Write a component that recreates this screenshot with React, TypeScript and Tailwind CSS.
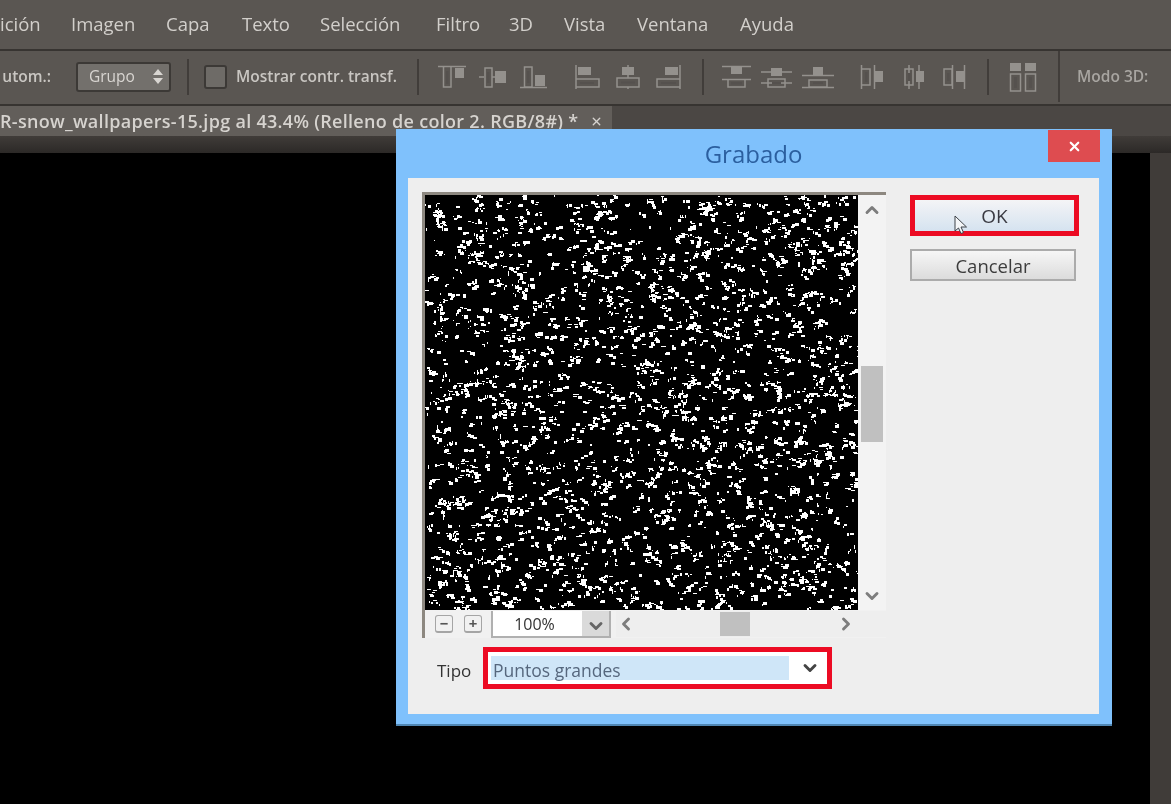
import { ChevronDown, ChevronLeft, ChevronRight, ChevronUp, X } from 'lucide-react';

const menuItems = [
  { label: 'ición', width: 'w-[41px]' },
  { label: 'Imagen', width: 'w-[65px]' },
  { label: 'Capa', width: 'w-[46px]' },
  { label: 'Texto', width: 'w-[48px]' },
  { label: 'Selección', width: 'w-[86px]' },
  { label: 'Filtro', width: 'w-[43px]' },
  { label: '3D', width: 'w-[25px]' },
  { label: 'Vista', width: 'w-[43px]' },
  { label: 'Ventana', width: 'w-[73px]' },
  { label: 'Ayuda', width: 'w-[58px]' },
];

// outline = hollow shapes and guide lines, solid = filled blocks
const alignIcons = [
  { w: 28, outline: 'M0 1.5H28M5.5 2V22H13V2', solid: 'M17 3H26V13H17Z', core: 'M8 6H10.500V19H8Z' },
  { w: 28, outline: 'M0 12H5M13 12H16M6 3H13V22H6Z', solid: 'M16 6H27V18H16Z', core: 'M8 7H10.500V18H8Z' },
  { w: 27, outline: 'M0 22.500H27M4.500 2H12V22H4.500Z', solid: 'M15 10H25V21H15Z', core: 'M7 6H9.500V18H7Z' },
  { w: 25, outline: 'M1 0V24M1 14H24V22H1', solid: 'M3 2H16V10H3Z', core: 'M5 17H19V19H5Z' },
  { w: 24, outline: 'M12 0V2M12 10V13M12 22V24M1 13H23V22H1Z', solid: 'M6 2H18V10H6Z', core: 'M5 16.500H19V18.500H5Z' },
  { w: 25, outline: 'M24 0V24M24 14H1V22H24', solid: 'M9 2H22V10H9Z', core: 'M5 17H20V19H5Z' },
  { w: 29, outline: 'M0 1.500H29M0 14.500H29M6 15V22H23V15', solid: 'M9 2H20V9H9Z', core: 'M9 17H20V19.500H9Z' },
  { w: 31, outline: 'M0 7H31M0 18H31M7 14H24V22H7Z', solid: 'M10 3H21V11H10Z', core: 'M11 17H20V19H11Z' },
  { w: 32, outline: 'M0 10.500H32M0 22.500H32M7 15H25V22H7Z', solid: 'M11 2H21V10H11Z', core: 'M11 17H21V19H11Z' },
  { w: 25, outline: 'M1.500 0V24M14.500 0V24M2 4H10V20H2', solid: 'M15 6H23V17H15Z', core: 'M5 7H7.500V17H5Z' },
  { w: 23, outline: 'M7 0V24M17 0V24M3 4H11V20H3Z', solid: 'M14 6H22V17H14Z', core: 'M6 8H8.500V16H6Z' },
  { w: 24, outline: 'M10.500 0V24M22.500 0V24M2 4H10V20H2Z', solid: 'M14 6H22V17H14Z', core: 'M5 8H7.500V16H5Z' },
];

function AlignIcon({ icon }: { icon: (typeof alignIcons)[number] }) {
  return (
    <svg width={icon.w} height={24} viewBox={`0 0 ${icon.w} 24`} className="shrink-0">
      <path d={icon.outline} fill="none" stroke="#94918d" strokeWidth="1.500" />
      <path d={icon.solid} fill="#94918d" />
      <path d={icon.core} fill="#55514e" />
    </svg>
  );
}

function AlignGroup({ items, gap }: { items: (typeof alignIcons); gap: string }) {
  return (
    <div className={`flex items-center ${gap}`}>
      {items.map((icon) => (
        <AlignIcon key={icon.outline} icon={icon} />
      ))}
    </div>
  );
}

function Separator({ ml }: { ml: string }) {
  return <div className={`h-[36px] w-[2px] shrink-0 bg-[#413d3a] ${ml}`} />;
}

// seeded so the speckle is the same on every load
function buildSpeckle() {
  let seed = 48271;
  const rnd = () => {
    seed = (seed * 16807) % 2147483647;
    return seed / 2147483647;
  };
  let d = '';
  for (let i = 0; i < 2000; i++) {
    const cx = Math.floor(rnd() * 433);
    const cy = Math.floor(rnd() * 415);
    const parts = 1 + Math.floor(rnd() * 5);
    let x = cx;
    let y = cy;
    for (let p = 0; p < parts; p++) {
      const w = 1 + Math.floor(rnd() * 4);
      const h = 1 + Math.floor(rnd() * 3);
      if (x >= 0 && y >= 0 && x + w <= 433 && y + h <= 415) {
        d += `M${x} ${y}h${w}v${h}h-${w}z`;
      }
      x += Math.floor(rnd() * 5) - 1;
      y += Math.floor(rnd() * 5) - 2;
    }
  }
  return d;
}

const speckle = buildSpeckle();

function ZoomButton({ label }: { label: string }) {
  return (
    <div className="flex h-[18px] w-[18px] items-center justify-center rounded-[3px] border border-b-2 border-[#a5a5a5] bg-[#f1f1f1] pb-[1px] text-[15px] leading-none font-bold text-[#555555]">
      {label}
    </div>
  );
}

function Cursor() {
  return (
    <svg width="14" height="20" viewBox="0 0 14 20" className="absolute top-[15px] left-[39px]">
      <path d="M1 1V16L4.500 13L7 18.500L9.500 17.500L7 12H12.500Z" fill="#f4f6f8" stroke="#3d4248" strokeWidth="1" />
    </svg>
  );
}

function Dialog() {
  return (
    <div className="absolute top-[129px] left-[396px] flex h-[597px] w-[716px] flex-col border-b-2 border-b-[#4f86b3] bg-[#7fc1fc] pr-[13px] pb-[10px] pl-[12px]">
      <div className="relative flex h-[49px] shrink-0 items-center justify-center">
        <span className="text-[24px] leading-none text-[#2b5f9f]">Grabado</span>
        <div className="absolute top-[1px] right-[-1px] flex h-[32px] w-[52px] items-center justify-center bg-[#de4c50] text-white">
          <X size={15} strokeWidth={3.5} />
        </div>
      </div>
      <div className="flex flex-1 bg-[#eeeeee] pt-[14px] pl-[14px]">
        <div className="w-[464px] shrink-0">
          <div className="flex h-[446px] flex-col border-t-[3px] border-l-[3px] border-t-[#8d8880] border-l-[#8d8880] bg-[#f1f1f1]">
            <div className="flex h-[415px]">
              <svg width="433" height="415" viewBox="0 0 433 415" shapeRendering="crispEdges" className="shrink-0 bg-black">
                <path d={speckle} fill="#ffffff" />
              </svg>
              <div className="flex flex-1 flex-col items-center bg-[#f3f3f3] pt-[5px] pb-[4px] text-[#7d7d7d]">
                <ChevronUp size={20} strokeWidth={3.5} />
                <div className="mt-[146px] h-[76px] w-[22px] bg-[#c0c0c0]" />
                <ChevronDown size={20} strokeWidth={3.5} className="mt-auto" />
              </div>
            </div>
            <div className="flex flex-1 items-center">
              <div className="flex items-center gap-[11px] pl-[10px]">
                <ZoomButton label="−" />
                <ZoomButton label="+" />
              </div>
              <div className="ml-[9px] flex h-[27px] w-[120px] border-r-[2px] border-b-[2px] border-l-[2px] border-[#b0b0b0] bg-white">
                <span className="flex-1 pr-[6px] text-center text-[16px] leading-[26px] text-[#333333]">100%</span>
                <div className="flex w-[27px] items-end justify-center bg-[#dadada] text-[#666666]">
                  <ChevronDown size={20} strokeWidth={3.5} />
                </div>
              </div>
              <div className="ml-[5px] flex h-[26px] flex-1 items-center bg-[#eeeeee] text-[#7d7d7d]">
                <ChevronLeft size={20} strokeWidth={3.5} />
                <div className="ml-[84px] h-[24px] w-[30px] bg-[#c0c0c0]" />
                <ChevronRight size={20} strokeWidth={3.5} className="mr-[30px] ml-auto" />
              </div>
            </div>
          </div>
          <div className="mt-[9px] flex items-center">
            <span className="ml-[15px] w-[46px] pt-[4px] text-[17px] leading-none text-[#333333]">Tipo</span>
            <div className="flex h-[42px] w-[349px] items-center border-[5px] border-[#ec0b23] bg-white pl-[3px]">
              <div className="flex h-[24px] w-[298px] items-center bg-[#cfe6f8] pt-[5px] pl-[2px] text-[17.500px] leading-none text-[#56677d]">
                Puntos grandes
              </div>
              <ChevronDown size={20} strokeWidth={3.5} className="ml-[11px] text-[#444444]" />
            </div>
          </div>
        </div>
        <div className="ml-[24px] flex w-[169px] flex-col">
          <div className="relative mt-[3px] h-[41px] border-[5px] border-[#ec0b23] bg-gradient-to-b from-[#f4f4f6] to-[#d5e3f0] pt-[1px] text-center text-[19px] leading-[31px] text-[#3a3a42]">
            OK
            <Cursor />
          </div>
          <div className="mt-[13px] h-[32px] w-[166px] border-2 border-[#ababab] bg-gradient-to-b from-[#f6f6f6] to-[#dcdcdc] text-center text-[18.500px] leading-[29px] text-[#3c3c3c]">
            Cancelar
          </div>
        </div>
      </div>
    </div>
  );
}

export default function App() {
  return (
    <div className="relative flex h-[804px] w-[1171px] flex-col overflow-hidden bg-black font-['Open_Sans',sans-serif] blur-[0.5px]">
      <div className="flex h-[49px] shrink-0 items-center gap-[30px] whitespace-nowrap bg-[#5a5652] text-[18.500px] leading-none text-[#d2cfcb]">
        {menuItems.map((item) => (
          <span key={item.label} className={item.width}>
            {item.label}
          </span>
        ))}
      </div>

      <div className="flex h-[57px] shrink-0 items-center whitespace-nowrap border-t-[2px] border-b-[2px] border-t-[#373431] border-b-[#373431] bg-[#5a5652] pb-[2px] text-[#c9c6c2]">
        <span className="w-[51px] text-right text-[15.500px] font-semibold">utom.:</span>
        <div className="ml-[25px] flex h-[30px] w-[95px] items-center rounded-[3px] border-2 border-[#3c3936] bg-[#73706c] pr-[6px] pl-[11px] text-[15.500px] text-[#d8d5d1]">
          Grupo
          <svg width="10" height="15" viewBox="0 0 10 15" className="ml-auto">
            <path d="M5 0L10 6H0ZM5 15L0 9H10Z" fill="#d8d5d1" />
          </svg>
        </div>
        <Separator ml="ml-[16px]" />
        <div className="ml-[15px] h-[24px] w-[23px] rounded-[3px] border-2 border-[#3c3936] bg-[#6e6b67]" />
        <span className="ml-[9px] w-[161px] text-[15.500px] font-semibold">Mostrar contr. transf.</span>
        <Separator ml="ml-[20px]" />
        <div className="ml-[19px]">
          <AlignGroup items={alignIcons.slice(0, 3)} gap="gap-[13px]" />
        </div>
        <div className="ml-[28px]">
          <AlignGroup items={alignIcons.slice(3, 6)} gap="gap-[16px]" />
        </div>
        <Separator ml="ml-[21px]" />
        <div className="ml-[18px]">
          <AlignGroup items={alignIcons.slice(6, 9)} gap="gap-[10px]" />
        </div>
        <div className="ml-[26px]">
          <AlignGroup items={alignIcons.slice(9, 12)} gap="gap-[17px]" />
        </div>
        <Separator ml="ml-[21px]" />
        <svg width="28" height="30" viewBox="0 0 28 30" className="ml-[20px] shrink-0">
          <path d="M1 1H12V9H1ZM16 1H27V9H16Z" fill="#94918d" />
          <path d="M1.500 12H11.500V29H1.500ZM16.500 12H26.500V29H16.500Z" fill="none" stroke="#94918d" strokeWidth="1.500" />
          <path d="M5 15H8V26H5ZM20 15H23V26H20Z" fill="#55514e" />
        </svg>
        <div className="ml-[21px] h-full w-[2px] bg-[#413d3a]" />
        <span className="ml-[17px] text-[15.500px] font-semibold text-[#a8a5a1]">Modo 3D:</span>
      </div>

      <div className="flex h-[30px] shrink-0 bg-[#4b4744]">
        <div className="flex w-[612px] items-center justify-between overflow-hidden whitespace-nowrap bg-[#625e5a] pr-[9px] text-[18px] font-semibold tracking-[0.3px] text-[#d6d3cf]">
          <span>R-snow_wallpapers-15.jpg al 43.4% (Relleno de color 2. RGB/8#) *</span>
          <X size={13} strokeWidth={2.5} className="shrink-0" />
        </div>
      </div>

      <div className="h-[17px] shrink-0 bg-gradient-to-b from-[#403c39] to-[#2c2927]" />

      <div className="flex flex-1">
        <div className="flex-1 bg-black" />
        <div className="w-[21px] bg-[#403c39]" />
      </div>

      <Dialog />
    </div>
  );
}
